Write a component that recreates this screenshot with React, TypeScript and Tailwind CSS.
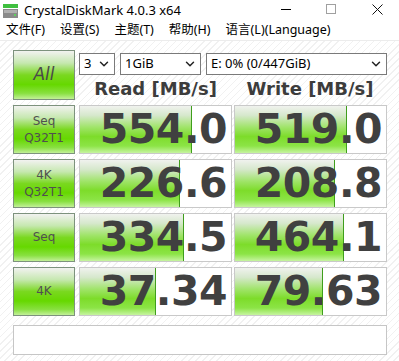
import React from 'react';
import { ChevronDown } from 'lucide-react';

type Row = { label: string[]; read: string; write: string; rw: number; ww: number };

const rows: Row[] = [
  { label: ['Seq', 'Q32T1'], read: '554.0', write: '519.0', rw: 74, ww: 74 },
  { label: ['4K', 'Q32T1'], read: '226.6', write: '208.8', rw: 66, ww: 66 },
  { label: ['Seq'], read: '334.5', write: '464.1', rw: 69, ww: 72 },
  { label: ['4K'], read: '37.34', write: '79.63', rw: 50, ww: 58 },
];

const menus = ['文件(F)', '设置(S)', '主题(T)', '帮助(H)', '语言(L)(Language)'];

const btnBg =
  'bg-[linear-gradient(to_bottom,#f2f2f0_0%,#c6e8b0_25%,#7ad820_50%,#66d800_70%,#88e040_88%,#c2f098_100%)]';

const barBg =
  'bg-[linear-gradient(to_bottom,#f0f2ee_0%,#d6e8cc_20%,#a0e46a_45%,#7ddc2a_65%,#8ce446_85%,#c6f4a0_100%)]';

const Select = ({ text, w }: { text: string; w: string }) => (
  <div className={`${w} h-[22px] bg-white border border-[#7a7a7a] flex items-center justify-between pl-[4px] pr-[3px] text-[13px] text-black`}>
    <span>{text}</span>
    <ChevronDown className="w-[14px] h-[14px] text-[#222]" strokeWidth={2.5} />
  </div>
);

const Cell = ({ value, pct }: { value: string; pct: number }) => (
  <div className="relative h-[49px] bg-white border border-[#c9c9c9] overflow-hidden">
    <div
      className={`absolute left-0 top-0 bottom-0 ${barBg} border-r border-[#3f9e1c]`}
      style={{ width: `${pct}%` }}
    />
    <div className="relative h-full flex items-center justify-end pr-[4px] text-[41px] font-bold text-[#404040] leading-none font-['DejaVu_Sans',sans-serif] tracking-[-0.5px]">
      {value}
    </div>
  </div>
);

export default function App() {
  return (
    <div className="w-[399px] h-[361px] bg-white font-['Noto_Sans','Noto_Sans_CJK_SC',sans-serif] overflow-hidden">
      {/* title bar */}
      <div className="h-[20px] flex items-center relative">
        <svg className="ml-[3px] mt-[1px]" width="15" height="14" viewBox="0 0 15 14">
          <rect x="0" y="0" width="15" height="4" fill="#3fbf3f" />
          <rect x="0" y="5" width="15" height="9" fill="#8a8a8a" />
          <rect x="1" y="6" width="13" height="3" fill="#b0b0b0" />
          <rect x="11" y="10" width="2" height="2" fill="#5fd05f" />
        </svg>
        <span className="ml-[6px] text-[13px] text-black leading-none">CrystalDiskMark 4.0.3 x64</span>
        <div className="absolute left-[281px] top-[9px] w-[10px] h-px bg-black" />
        <div className="absolute left-[326px] top-[4px] w-[10px] h-[10px] border border-[#a0a0a0]" />
        <svg className="absolute left-[372px] top-[4px]" width="11" height="11" viewBox="0 0 11 11">
          <path d="M0.5 0.5 L10.5 10.5 M10.5 0.5 L0.5 10.5" stroke="#111" strokeWidth="1" />
        </svg>
      </div>
      {/* menu */}
      <div className="h-[20px] flex items-center pl-[6px] gap-[15px] text-[12.5px] text-black">
        {menus.map((m) => (
          <span key={m}>{m}</span>
        ))}
      </div>
      <div className="h-px bg-[#ececec]" />
      {/* body */}
      <div className="h-[320px] bg-[repeating-linear-gradient(135deg,#ffffff_0px,#ffffff_4px,#f1f1f1_4px,#f1f1f1_5px)] pl-[13px] pt-[9px]">
        <div className="flex">
          <div className={`w-[62px] h-[50px] ${btnBg} border border-[#7d927d] flex items-center justify-center text-[17px] italic text-[#4a4a4a] font-['DejaVu_Sans',sans-serif]`}>
            All
          </div>
          <div className="ml-[4px] flex flex-col">
            <div className="flex gap-[5px] mt-[3px] font-['Noto_Sans',sans-serif]">
              <Select text="3" w="w-[36px]" />
              <Select text="1GiB" w="w-[81px]" />
              <Select text="E: 0% (0/447GiB)" w="w-[181px]" />
            </div>
            <div className="flex mt-[3px] text-[18px] font-bold text-[#3c3c3c] leading-[22px] font-['DejaVu_Sans',sans-serif]">
              <div className="w-[153px] text-center">Read [MB/s]</div>
              <div className="w-[156px] text-center">Write [MB/s]</div>
            </div>
          </div>
        </div>
        <div className="mt-[5px] flex flex-col gap-[5px]">
          {rows.map((r, i) => (
            <div key={i} className="flex">
              <div className={`w-[62px] h-[49px] ${btnBg} border border-[#7d927d] flex flex-col items-center justify-center text-[12px] leading-[17px] text-[#505050] font-['DejaVu_Sans',sans-serif]`}>
                {r.label.map((l) => (
                  <span key={l}>{l}</span>
                ))}
              </div>
              <div className="ml-[4px] w-[153px]">
                <Cell value={r.read} pct={r.rw} />
              </div>
              <div className="ml-[2px] w-[153px]">
                <Cell value={r.write} pct={r.ww} />
              </div>
            </div>
          ))}
        </div>
        <div className="mt-[9px] w-[374px] h-[30px] bg-white border border-[#c6c6c6]" />
      </div>
    </div>
  );
}
